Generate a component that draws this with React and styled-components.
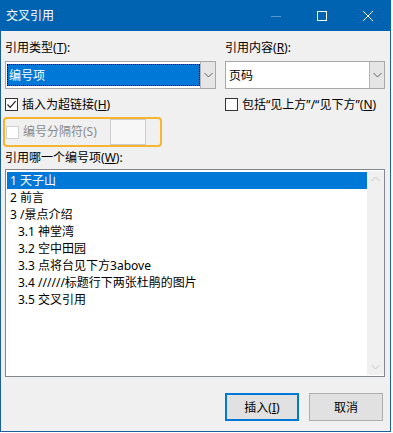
import React from "react";
import styled, { createGlobalStyle } from "styled-components";

const Global = createGlobalStyle`
  html, body { margin: 0; padding: 0; background: #ffffff; }
  body { font-family: "Noto Sans", "Noto Sans CJK SC", sans-serif; font-size: 12px; color: #000; }
  * { box-sizing: border-box; }
`;

const Window = styled.div`
  width: 391px;
  height: 432px;
  background: #f0f0f0;
  border: 1px solid #1d5e9e;
  border-top: none;
  display: flex;
  flex-direction: column;
`;

const TitleBar = styled.div`
  height: 31px;
  margin: 0 -1px;
  background: #0063b1;
  display: flex;
  align-items: center;
  color: #fff;
`;

const Title = styled.div`
  flex: 1;
  padding-left: 6px;
  font-size: 12px;
  line-height: 31px;
`;

const CtrlBtn = styled.div`
  width: 46px;
  height: 31px;
  display: flex;
  align-items: center;
  justify-content: center;
  opacity: ${(p) => (p.$dim ? 0.35 : 1)};
`;

const Body = styled.div`
  flex: 1;
  display: flex;
  flex-direction: column;
  padding: 9px 6px 0 4px;
`;

const TopGrid = styled.div`
  display: grid;
  grid-template-columns: 211px 160px;
  column-gap: 9px;
`;

const Col = styled.div`
  display: flex;
  flex-direction: column;
`;

const Label = styled.div`
  height: 16px;
  line-height: 16px;
  white-space: nowrap;
  color: ${(p) => (p.$disabled ? "#8a8a8a" : "#000")};
`;

const Lat = styled.span`
  font-family: "Noto Sans", sans-serif;
`;

const U = styled.span`
  text-decoration: underline;
`;

const Key = ({ k }) => (
  <Lat>
    (<U>{k}</U>)
  </Lat>
);

const Combo = styled.div`
  margin-top: 5px;
  height: 28px;
  background: #fff;
  border: 1px solid #a8a8a8;
  display: flex;
  align-items: stretch;
  padding: 1px;
`;

const ComboText = styled.div`
  flex: 1;
  display: flex;
  align-items: center;
  padding-left: 2px;
  margin: 1px 0;
  background: ${(p) => (p.$selected ? "#0078d7" : "transparent")};
  color: ${(p) => (p.$selected ? "#fff" : "#000")};
  outline: ${(p) => (p.$selected ? "1px dotted #000" : "none")};
  outline-offset: -1px;
  font-size: 12px;
`;

const DropBtn = styled.div`
  width: 15px;
  margin: -1px -1px -1px 0;
  background: #e5e5e5;
  border-left: 1px solid #b5b5b5;
  display: flex;
  align-items: center;
  justify-content: center;
`;

const CheckRow = styled.label`
  margin-top: 7px;
  height: 16px;
  display: flex;
  align-items: center;
  gap: 4px;
  white-space: nowrap;
`;

const Box = styled.span`
  width: 13px;
  height: 13px;
  border: 1px solid ${(p) => (p.$disabled ? "#cfcfcf" : "#333")};
  background: #fff;
  display: inline-flex;
  align-items: center;
  justify-content: center;
  flex: none;
`;

const Highlight = styled.div`
  margin: 5px 0 0 -2px;
  width: 159px;
  height: 30px;
  border: 2px solid #f5b52e;
  border-radius: 4px;
  display: flex;
  align-items: center;
  padding-left: 1px;
  gap: 4px;
`;

const SepInput = styled.div`
  margin-left: 9px;
  width: 36px;
  height: 26px;
  background: #f7f7f7;
  border: 1px solid #cccccc;
`;

const ListLabel = styled(Label)`
  margin-top: 3px;
`;

const ListBox = styled.div`
  margin-top: 3px;
  width: 380px;
  height: 208px;
  background: #fff;
  border: 1px solid #828790;
  display: flex;
  padding: 1px 0 1px 1px;
`;

const Items = styled.div`
  flex: 1;
  padding-top: 1px;
`;

const Item = styled.div`
  height: 17px;
  line-height: 17px;
  padding-left: ${(p) => 3 + p.$level * 8}px;
  background: ${(p) => (p.$selected ? "#0078d7" : "transparent")};
  color: ${(p) => (p.$selected ? "#fff" : "#000")};
  white-space: nowrap;
  font-size: 12px;
`;

const ScrollBar = styled.div`
  width: 17px;
  background: #f0f0f0;
  display: flex;
  flex-direction: column;
  justify-content: space-between;
  align-items: center;
  padding: 5px 0;
`;

const Buttons = styled.div`
  margin-top: 16px;
  display: flex;
  justify-content: flex-end;
  gap: 10px;
  padding-right: 1px;
`;

const Button = styled.div`
  width: 74px;
  height: 28px;
  background: #e1e1e1;
  border: ${(p) => (p.$default ? "2px solid #0078d7" : "1px solid #adadad")};
  display: flex;
  align-items: center;
  justify-content: center;
  font-size: 12px;
`;

const Chevron = ({ up, color = "#606060" }) => (
  <svg width="9" height="6" viewBox="0 0 9 6">
    <path
      d={up ? "M0.5 5 L4.5 1 L8.5 5" : "M0.5 1 L4.5 5 L8.5 1"}
      fill="none"
      stroke={color}
      strokeWidth="1"
    />
  </svg>
);

const Check = () => (
  <svg width="11" height="11" viewBox="0 0 11 11">
    <path d="M1.5 5.5 L4.2 8.3 L9.6 2.2" fill="none" stroke="#222" strokeWidth="1.2" />
  </svg>
);

const items = [
  { t: "1 天子山", l: 0, s: true },
  { t: "2 前言", l: 0 },
  { t: "3 /景点介绍", l: 0 },
  { t: "3.1 神堂湾", l: 1 },
  { t: "3.2 空中田园", l: 1 },
  { t: "3.3 点将台见下方3above", l: 1 },
  { t: "3.4 //////标题行下两张杜鹃的图片", l: 1 },
  { t: "3.5 交叉引用", l: 1 },
];

export default function App() {
  return (
    <>
      <Global />
      <Window>
        <TitleBar>
          <Title>交叉引用</Title>
          <CtrlBtn $dim>
            <svg width="10" height="10" viewBox="0 0 10 10">
              <path d="M0 5.5 H10" stroke="#fff" strokeWidth="1" />
            </svg>
          </CtrlBtn>
          <CtrlBtn>
            <svg width="10" height="10" viewBox="0 0 10 10">
              <rect x="0.5" y="0.5" width="9" height="9" fill="none" stroke="#fff" strokeWidth="1" />
            </svg>
          </CtrlBtn>
          <CtrlBtn>
            <svg width="10" height="10" viewBox="0 0 10 10">
              <path d="M0 0 L10 10 M10 0 L0 10" stroke="#fff" strokeWidth="1" />
            </svg>
          </CtrlBtn>
        </TitleBar>
        <Body>
          <TopGrid>
            <Col>
              <Label>
                引用类型<Key k="T" />:
              </Label>
              <Combo>
                <ComboText $selected>编号项</ComboText>
                <DropBtn>
                  <Chevron />
                </DropBtn>
              </Combo>
              <CheckRow>
                <Box>
                  <Check />
                </Box>
                <span>
                  插入为超链接<Key k="H" />
                </span>
              </CheckRow>
            </Col>
            <Col>
              <Label>
                引用内容<Key k="R" />:
              </Label>
              <Combo>
                <ComboText>页码</ComboText>
                <DropBtn>
                  <Chevron />
                </DropBtn>
              </Combo>
              <CheckRow>
                <Box />
                <span>
                  包括<Lat>“</Lat>见上方<Lat>”/“</Lat>见下方<Lat>”</Lat>
                  <Key k="N" />
                </span>
              </CheckRow>
            </Col>
          </TopGrid>
          <Highlight>
            <Box $disabled />
            <Label $disabled>
              编号分隔符<Lat>(S)</Lat>
            </Label>
            <SepInput />
          </Highlight>
          <ListLabel>
            引用哪一个编号项<Key k="W" />:
          </ListLabel>
          <ListBox>
            <Items>
              {items.map((it) => (
                <Item key={it.t} $level={it.l} $selected={it.s}>
                  {it.t}
                </Item>
              ))}
            </Items>
            <ScrollBar>
              <Chevron up color="#c2c2c2" />
              <Chevron color="#c2c2c2" />
            </ScrollBar>
          </ListBox>
          <Buttons>
            <Button $default>
              插入<Key k="I" />
            </Button>
            <Button>取消</Button>
          </Buttons>
        </Body>
      </Window>
    </>
  );
}
